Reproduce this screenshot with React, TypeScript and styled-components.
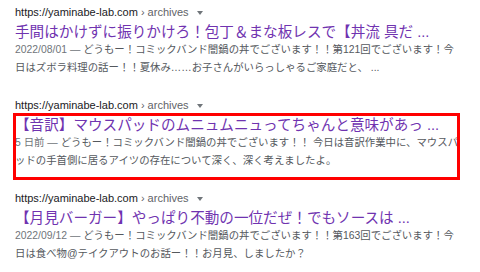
import React from 'react';
import styled, { createGlobalStyle } from 'styled-components';

const GlobalStyle = createGlobalStyle`
  html, body {
    margin: 0;
    padding: 0;
    background: #ffffff;
  }
  body {
    font-family: "Liberation Sans", Arial, "Noto Sans CJK JP", sans-serif;
  }
`;

const Page = styled.div`
  width: 480px;
  height: 272px;
  overflow: hidden;
  box-sizing: border-box;
  padding: 4px 0 0 15px;
  display: flex;
  flex-direction: column;
  gap: 20px;
`;

const Result = styled.div<{ $marked?: boolean }>`
  position: relative;
  display: flex;
  flex-direction: column;

  ${p => p.$marked && `
    &::after {
      content: '';
      position: absolute;
      left: -2px;
      top: 16px;
      width: 447px;
      height: 67px;
      box-sizing: border-box;
      border: 3px solid #ff0000;
      pointer-events: none;
    }
  `}
`;

const UrlRow = styled.div`
  display: flex;
  align-items: center;
  height: 16px;
  font-size: 11px;
  color: #202124;
  white-space: nowrap;
`;

const Crumb = styled.span`
  color: #5f6368;
  margin-left: 3px;
`;

const Caret = styled.span`
  width: 0;
  height: 0;
  margin-left: 8px;
  margin-top: 1px;
  border-left: 3px solid transparent;
  border-right: 3px solid transparent;
  border-top: 4px solid #70757a;
`;

const Title = styled.div`
  margin-top: 3px;
  height: 18px;
  line-height: 18px;
  font-size: 14.6px;
  color: #7033b0;
  white-space: nowrap;
`;

const Snippet = styled.div`
  font-size: 10.4px;
  line-height: 18px;
  color: #54585d;
  white-space: nowrap;
`;

const Line = styled.div``;

const Date = styled.span`
  color: #70757a;
`;

type Item = {
  title: string;
  date: string;
  lines: [string, string];
  marked?: boolean;
};

const results: Item[] = [
  {
    title: '手間はかけずに振りかけろ！包丁＆まな板レスで【丼流 具だ ...',
    date: '2022/08/01',
    lines: [
      'どうもー！コミックバンド闇鍋の丼でございます！！第121回でございます！今',
      '日はズボラ料理の話ー！！夏休み……お子さんがいらっしゃるご家庭だと、 ...',
    ],
  },
  {
    title: '【音訳】マウスパッドのムニュムニュってちゃんと意味があっ ...',
    date: '5 日前',
    lines: [
      'どうもー！コミックバンド闇鍋の丼でございます！！ 今日は音訳作業中に、マウスパ',
      'ッドの手首側に居るアイツの存在について深く、深く考えましたよ。',
    ],
    marked: true,
  },
  {
    title: '【月見バーガー】やっぱり不動の一位だぜ！でもソースは ...',
    date: '2022/09/12',
    lines: [
      'どうもー！コミックバンド闇鍋の丼でございます！！第163回でございます！今',
      '日は食べ物@テイクアウトのお話ー！！お月見、しましたか？',
    ],
  },
];

const App: React.FC = () => {
  return (
    <>
      <GlobalStyle />
      <Page>
        {results.map((r, i) => (
          <Result key={i} $marked={r.marked}>
            <UrlRow>
              https://yaminabe-lab.com
              <Crumb>› archives</Crumb>
              <Caret />
            </UrlRow>
            <Title>{r.title}</Title>
            <Snippet>
              <Line>
                <Date>{r.date} — </Date>
                {r.lines[0]}
              </Line>
              <Line>{r.lines[1]}</Line>
            </Snippet>
          </Result>
        ))}
      </Page>
    </>
  );
};

export default App;
